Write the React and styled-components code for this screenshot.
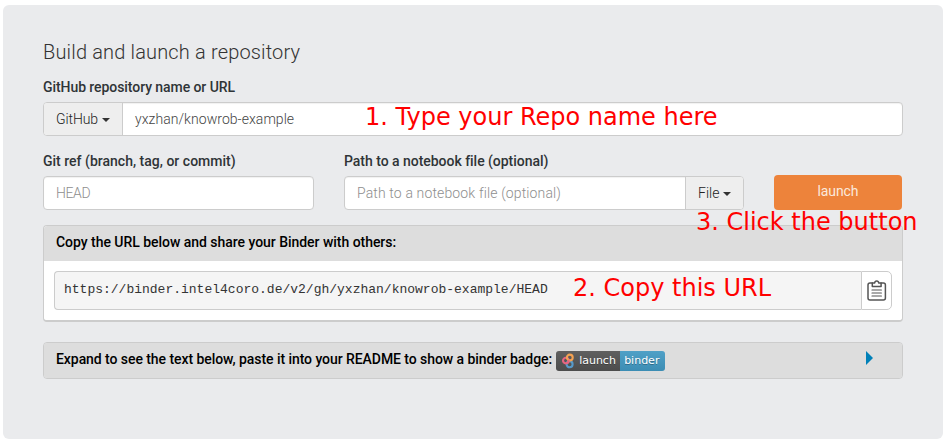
import React from "react";
import styled, { createGlobalStyle } from "styled-components";

const Global = createGlobalStyle`
  * { box-sizing: border-box; }
  body { margin: 0; background: #fff; font-family: Roboto, "Noto Sans", sans-serif; font-size: 14px; color: #333; }
`;
const Page = styled.div`
  position: relative;
  width: 948px;
  height: 442px;
  padding: 5px 5px 3px 3px;
  overflow: hidden;
`;
const Form = styled.main`
  height: 434px;
  padding: 33px 40px 0;
  background: #eaebed;
  border-radius: 6px;
`;
const Title = styled.h1`
  margin: 0;
  height: 28px;
  font-size: 20px;
  line-height: 28px;
  font-weight: 300;
  color: #333;
  white-space: nowrap;
  letter-spacing: ${(p) => p.$track || 0}px;
`;
const Label = styled.label`
  display: block;
  height: 20px;
  margin-bottom: 5px;
  font-size: 14px;
  line-height: 20px;
  font-weight: 500;
  color: #2f3437;
  white-space: nowrap;
  letter-spacing: ${(p) => p.$track || 0}px;
`;
const RepoField = styled.div`
  margin-top: 11px;
`;
const Fields = styled.div`
  display: grid;
  grid-template-columns: 271px 400px 128px;
  column-gap: 30px;
  margin-top: 15px;
  align-items: end;
`;
const Group = styled.div`
  display: flex;
  height: 34px;
  background: #fff;
  border: 1px solid #ccc;
  border-radius: 4px;
  box-shadow: inset 0 1px 1px rgba(0, 0, 0, 0.06);
  overflow: hidden;
`;
const Value = styled.div`
  flex: 1;
  padding-left: 12px;
  line-height: 32px;
  font-weight: 300;
  white-space: nowrap;
  color: ${(p) => (p.$placeholder ? "#8e8e8e" : "#444")};
  letter-spacing: ${(p) => p.$track || 0}px;
`;
const Addon = styled.button`
  display: flex;
  align-items: center;
  gap: 4px;
  width: ${(p) => p.$width}px;
  padding: 0 0 0 12px;
  border: 0 solid #ccc;
  border-width: ${(p) => (p.$side === "left" ? "0 1px 0 0" : "0 0 0 1px")};
  background: #eee;
  font: 300 14px Roboto, sans-serif;
  color: #222;
  letter-spacing: ${(p) => p.$track || 0}px;
`;
const Caret = styled.i`
  margin-top: 2px;
  border: 4px solid transparent;
  border-top-color: #333;
  border-bottom: 0;
`;
const Launch = styled.button`
  height: 35px;
  padding: 0 0 2px;
  border: 0;
  border-radius: 4px;
  background: #ed833b;
  color: #fbe9dc;
  font: 400 14px/33px Roboto, sans-serif;
  letter-spacing: -0.1px;
`;
const Card = styled.section`
  margin-top: ${(p) => p.$top}px;
  border: 1px solid #ccc;
  border-bottom-width: ${(p) => p.$bottom || 1}px;
  border-radius: 4px;
  background: #fff;
  overflow: hidden;
`;
const CardHead = styled.header`
  display: flex;
  align-items: center;
  height: 35px;
  padding: 0 29px 4px 12px;
  background: #ddd;
  color: #000;
  font-weight: 500;
  white-space: nowrap;
`;
const HeadText = styled.span`
  letter-spacing: ${(p) => p.$track || 0}px;
`;
const CardBody = styled.div`
  display: flex;
  padding: 10px;
`;
const Url = styled.pre`
  flex: 1;
  margin: 0;
  height: 39px;
  padding-left: 9px;
  border: 1px solid #ccc;
  border-right: 0;
  border-radius: 4px 0 0 4px;
  background: #f5f5f5;
  color: #333;
  font: 13px/35px "Liberation Mono", monospace;
`;
const CopyButton = styled.button`
  display: grid;
  place-items: center;
  width: 31px;
  height: 39px;
  padding: 0;
  border: 1px solid #ccc;
  border-radius: 0 5px 5px 0;
  background: #fff;
`;
const Badge = styled.span`
  display: flex;
  align-items: center;
  width: 109px;
  height: 20px;
  margin: 4px 0 0 4px;
  border-radius: 3px;
  overflow: hidden;
  font: 11px/20px "DejaVu Sans", sans-serif;
  color: #fff;
  text-shadow: 0 1px rgba(1, 1, 1, 0.3);
`;
const BadgePart = styled.span`
  display: flex;
  align-items: center;
  height: 20px;
  width: ${(p) => p.$width}px;
  padding-left: ${(p) => p.$pad}px;
  gap: 4px;
  background: linear-gradient(rgba(187, 187, 187, 0.1), rgba(0, 0, 0, 0.1)), ${(p) => p.$color};
`;
const Expand = styled.i`
  margin: 0 0 2px auto;
  border: 7px solid transparent;
  border-left-color: #0080b8;
  border-right: 0;
`;
const Note = styled.div`
  position: absolute;
  left: ${(p) => p.$x}px;
  top: ${(p) => p.$y}px;
  font: 24px/28px "DejaVu Sans", sans-serif;
  color: #f00;
  white-space: nowrap;
`;

const Clipboard = () => (
  <svg width="20" height="22" viewBox="0 0 20 22" fill="none" stroke="#555" strokeWidth="1.5" strokeLinecap="round" strokeLinejoin="round">
    <path d="M5.3 3H3Q1 3 1 5V18Q1 20 3 20H16.4Q18.4 20 18.4 18V5Q18.4 3 16.4 3H14.1" />
    <path d="M5.3 6.5V3H7.7C7.9 .2 11.5 .2 11.7 3H14.1V6.5Z" />
    <path d="M5 10H14.4M5 13H14.4M5 16H14.4" strokeWidth="1.2" />
  </svg>
);
const BinderLogo = () => (
  <svg width="13" height="16" viewBox="0 0 13 16" fill="none" strokeWidth="2.1">
    <circle cx="7.6" cy="11.3" r="3" stroke="#579aca" />
    <circle cx="3.8" cy="7.6" r="2.8" stroke="#e66581" />
    <circle cx="7.8" cy="4.5" r="2.9" stroke="#f5a252" />
    <path d="M6.5 6.8A2.8 2.8 0 0 1 5.4 9.9" stroke="#e66581" />
  </svg>
);

export default function App() {
  return (
    <Page>
      <Global />
      <Form>
        <Title $track={0.16}>Build and launch a repository</Title>
        <RepoField>
          <Label $track={-0.07}>GitHub repository name or URL</Label>
          <Group>
            <Addon $side="left" $width={79} $track={-0.1}>GitHub <Caret /></Addon>
            <Value $track={0.05}>yxzhan/knowrob-example</Value>
          </Group>
        </RepoField>
        <Fields>
          <div>
            <Label $track={0.01}>Git ref (branch, tag, or commit)</Label>
            <Group><Value $placeholder $track={-0.4}>HEAD</Value></Group>
          </div>
          <div>
            <Label $track={-0.03}>Path to a notebook file (optional)</Label>
            <Group>
              <Value $placeholder $track={0.14}>Path to a notebook file (optional)</Value>
              <Addon $side="right" $width={58}>File <Caret /></Addon>
            </Group>
          </div>
          <Launch>launch</Launch>
        </Fields>
        <Card $top={15} $bottom={2}>
          <CardHead><HeadText $track={-0.035}>Copy the URL below and share your Binder with others:</HeadText></CardHead>
          <CardBody>
            <Url>https://binder.intel4coro.de/v2/gh/yxzhan/knowrob-example/HEAD</Url>
            <CopyButton aria-label="Copy"><Clipboard /></CopyButton>
          </CardBody>
        </Card>
        <Card $top={20}>
          <CardHead>
            <HeadText $track={-0.063}>Expand to see the text below, paste it into your README to show a binder badge:</HeadText>
            <Badge>
              <BadgePart $width={64} $pad={6} $color="#555"><BinderLogo />launch</BadgePart>
              <BadgePart $width={45} $pad={4} $color="#439dc8">binder</BadgePart>
            </Badge>
            <Expand />
          </CardHead>
        </Card>
      </Form>
      <Note $x={365} $y={103}>1. Type your Repo name here</Note>
      <Note $x={573} $y={274}>2. Copy this URL</Note>
      <Note $x={696} $y={208}>3. Click the button</Note>
    </Page>
  );
}
